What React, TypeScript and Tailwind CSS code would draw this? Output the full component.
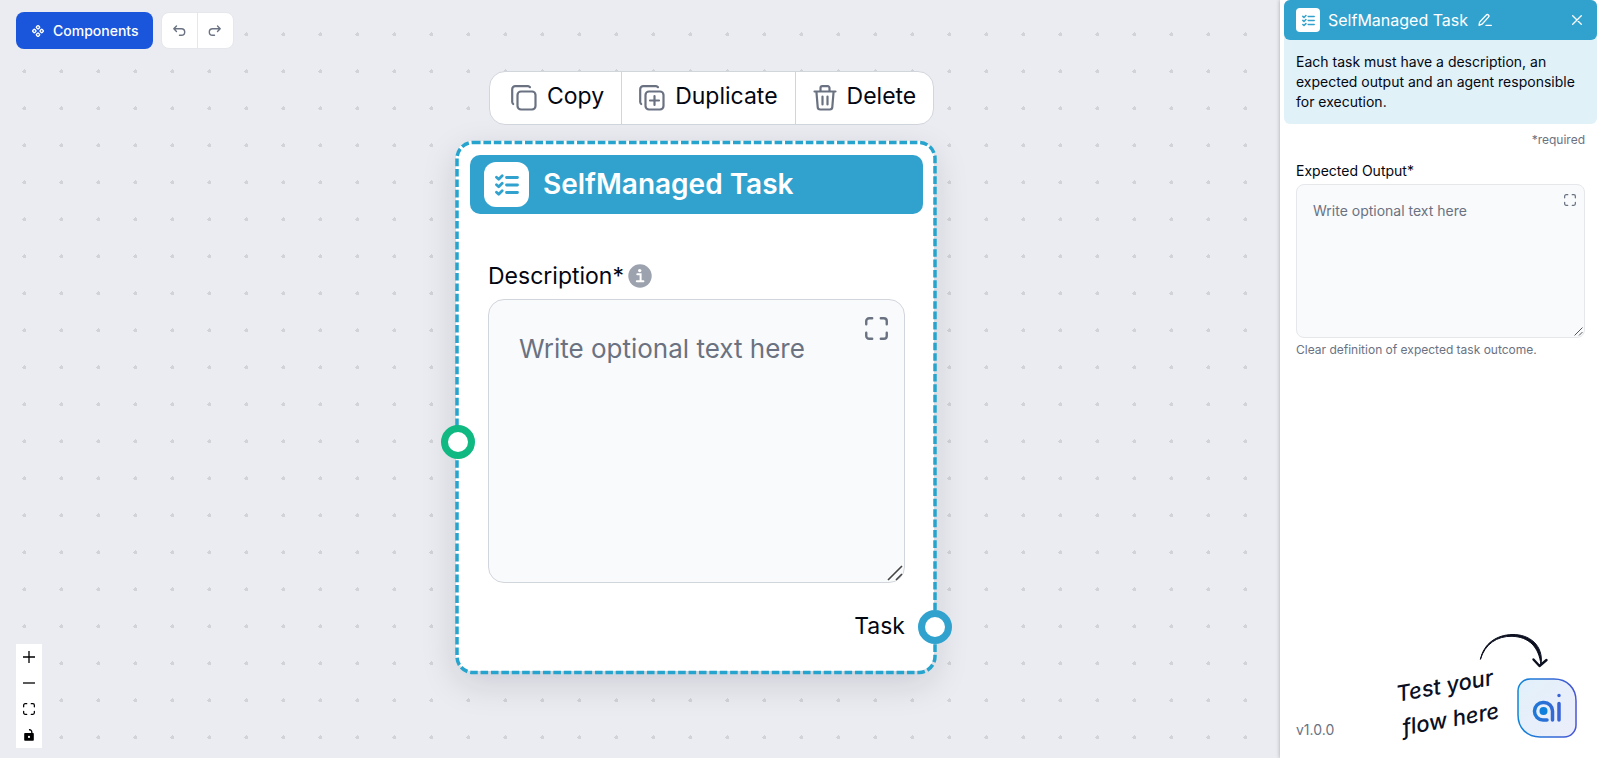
import { useId } from "react";

type IconProps = { className?: string };

function ComponentsIcon({ className }: IconProps) {
  return (
    <svg className={className} viewBox="0 0 14 14" fill="none" stroke="currentColor" strokeWidth="1.3">
      <rect x="5.6" y="1.9" width="2.8" height="2.8" rx=".7" transform="rotate(45 7 3.3)" />
      <rect x="5.6" y="9.3" width="2.8" height="2.8" rx=".7" transform="rotate(45 7 10.7)" />
      <rect x="1.9" y="5.6" width="2.8" height="2.8" rx=".7" transform="rotate(45 3.3 7)" />
      <rect x="9.3" y="5.6" width="2.8" height="2.8" rx=".7" transform="rotate(45 10.7 7)" />
    </svg>
  );
}

function UndoIcon({ className }: IconProps) {
  return (
    <svg className={className} viewBox="0 0 14 14" fill="none" stroke="currentColor" strokeWidth="1.4" strokeLinecap="round" strokeLinejoin="round">
      <path d="M4.5 2 1.8 4.7l2.7 2.7M1.8 4.7h7.6a3.3 3.3 0 0 1 0 6.6H7.5" />
    </svg>
  );
}

function CopyIcon({ className, plus }: IconProps & { plus?: boolean }) {
  return (
    <svg className={className} viewBox="0 0 26 26" fill="none" stroke="currentColor" strokeWidth="2.2" strokeLinecap="round" strokeLinejoin="round">
      <rect x="6.5" y="6.5" width="18" height="18" rx="3.5" />
      <path d="M2.2 19A3 3 0 0 1 1.2 17V4.2a3 3 0 0 1 3-3H17a3 3 0 0 1 2 1" />
      {plus && <path d="M15.5 11v9M11 15.5h9" />}
    </svg>
  );
}

function TrashIcon({ className }: IconProps) {
  return (
    <svg className={className} viewBox="0 0 24 26" fill="none" stroke="currentColor" strokeWidth="2.2" strokeLinecap="round" strokeLinejoin="round">
      <path d="M1.5 6.5h21M7.5 6V3a1.8 1.8 0 0 1 1.8-1.8h5.4A1.8 1.8 0 0 1 16.5 3v3M3.4 6.5l1.3 15.7a2.5 2.5 0 0 0 2.5 2.3h9.6a2.5 2.5 0 0 0 2.5-2.3l1.3-15.7M9.5 11.5v8M14.5 11.5v8" />
    </svg>
  );
}

function TaskListIcon({ className }: IconProps) {
  return (
    <svg className={className} viewBox="0 0 24 24" fill="none" stroke="currentColor" strokeWidth="2.8" strokeLinecap="round" strokeLinejoin="round">
      <path d="M11.5 4.5h11M11.5 12h11M11.5 19.5h11M1.5 4.3l2.2 2 3.5-3.5M1.5 11.8l2.2 2 3.5-3.5M1.5 19.3l2.2 2 3.5-3.5" />
    </svg>
  );
}

function ExpandIcon({ className }: IconProps) {
  return (
    <svg className={className} viewBox="0 0 24 24" fill="none" stroke="currentColor" strokeWidth="2.5" strokeLinecap="round" strokeLinejoin="round">
      <path d="M1.3 7.5V4.3a3 3 0 0 1 3-3h3.2M16.5 1.3h3.2a3 3 0 0 1 3 3v3.2M22.7 16.5v3.2a3 3 0 0 1-3 3h-3.2M7.5 22.7H4.3a3 3 0 0 1-3-3v-3.2" />
    </svg>
  );
}

function InfoIcon({ className }: IconProps) {
  return (
    <svg className={className} viewBox="0 0 24 24">
      <circle cx="12" cy="12" r="11.7" fill="#9ca3af" />
      <circle cx="11.7" cy="6.6" r="1.7" fill="#fff" />
      <path d="M9.3 10.3h3.3v6.700M8.800 17.300h6.600" stroke="#fff" strokeWidth="2" fill="none" strokeLinecap="round" />
    </svg>
  );
}

function PencilIcon({ className }: IconProps) {
  return (
    <svg className={className} viewBox="0 0 14 14" fill="none" stroke="currentColor" strokeWidth="1.3" strokeLinecap="round" strokeLinejoin="round">
      <path d="M1 12.3l.6-3.200L8.300 2a1.500 1.500 0 0 1 2.200 2.100L4 11.200zM8 12.400h5.300" />
    </svg>
  );
}

function ResizeGrip({ className }: IconProps) {
  return (
    <svg className={className} viewBox="0 0 16 16" fill="none" stroke="#444" strokeWidth="1.6">
      <path d="M1 15 15 1M9 15l6-6" />
    </svg>
  );
}

function AiLogo({ className }: IconProps) {
  const id = useId();
  return (
    <svg className={className} viewBox="0 0 60 60" fill="none">
      <defs>
        <linearGradient id={id} x1="0" y1="0" x2="60" y2="0" gradientUnits="userSpaceOnUse">
          <stop stopColor="#0e86d8" />
          <stop offset="1" stopColor="#4a55d4" />
        </linearGradient>
        <linearGradient id={id + "bg"} x1="0" y1="0" x2="1" y2="1">
          <stop stopColor="#e2f0fa" />
          <stop offset="1" stopColor="#ebeefb" />
        </linearGradient>
      </defs>
      <path d="M13 1h24c13 0 22 9 22 22v24a12 12 0 0 1-12 12H23C10 59 1 50 1 37V13A12 12 0 0 1 13 1z" fill={`url(#${id}bg)`} stroke={`url(#${id})`} strokeWidth="1.5" />
      <g stroke={`url(#${id})`} strokeWidth="3.5" strokeLinecap="round">
        <path d="M35.5 42V33a8.5 8.5 0 0 0-8.5-8.5h-1a8.5 8.5 0 0 0-8.5 8.5v.5a8.5 8.5 0 0 0 8.5 8.5h4" />
        <path d="M42 25.5V42M42 17.5v.1" />
      </g>
      <circle cx="26.5" cy="33" r="4" fill="#0e7fdc" />
    </svg>
  );
}

function ArrowDoodle({ className }: IconProps) {
  return (
    <svg className={className} viewBox="0 0 70 36" fill="none" stroke="#0b0f1f" strokeLinecap="round" strokeLinejoin="round">
      <path d="M1.5 26C5 10 18 2 33 1.5 50 1 65 12 62 32 60 14 50 3.8 33 3.3 18 3 6 11 1.5 26z" fill="#0b0f1f" strokeWidth="1" />
      <path d="M54.5 26.5l6 6.5 7-6" strokeWidth="2.4" />
    </svg>
  );
}

const toolbar = [
  { label: "Copy", icon: <CopyIcon className="size-[26px]" /> },
  { label: "Duplicate", icon: <CopyIcon className="size-[26px]" plus /> },
  { label: "Delete", icon: <TrashIcon className="h-[26px] w-6" /> },
];

function TopBar() {
  return (
    <div className="absolute left-4 top-3 flex gap-2">
      <button className="flex h-[37px] items-center gap-2 rounded-lg bg-[#1a56db] pl-[15px] pr-[14px] text-sm font-medium text-white">
        <ComponentsIcon className="size-[14px]" />
        Components
      </button>
      <div className="flex h-[37px] divide-x divide-gray-200 rounded-lg border border-gray-200 bg-white text-gray-500">
        <button aria-label="Undo" className="flex w-9 items-center justify-center">
          <UndoIcon className="size-[14px]" />
        </button>
        <button aria-label="Redo" className="flex w-[35px] items-center justify-center">
          <UndoIcon className="size-[14px] -scale-x-100" />
        </button>
      </div>
    </div>
  );
}

function ZoomControls() {
  return (
    <div className="absolute bottom-[10px] left-4 flex w-[26px] flex-col bg-white text-black">
      <button aria-label="Zoom in" className="flex h-[26px] items-center justify-center">
        <svg className="size-3" viewBox="0 0 12 12" stroke="currentColor" strokeWidth="1.3">
          <path d="M6 0v12M0 6h12" />
        </svg>
      </button>
      <button aria-label="Zoom out" className="flex h-[26px] items-center justify-center">
        <svg className="size-3" viewBox="0 0 12 12" stroke="currentColor" strokeWidth="1.3">
          <path d="M0 6h12" />
        </svg>
      </button>
      <button aria-label="Fit view" className="flex h-[26px] items-center justify-center">
        <ExpandIcon className="size-3" />
      </button>
      <button aria-label="Lock" className="flex h-[26px] items-center justify-center">
        <svg className="h-3 w-[10px]" viewBox="0 0 10 12">
          <path d="M1 4h8a.8.8 0 0 1 .8.8v6.200a.8.8 0 0 1-.8.8H1a.8.8 0 0 1-.8-.8V4.800A.8.8 0 0 1 1 4zM5 6.800a1 1 0 1 0 0 2.200 1 1 0 0 0 0-2.200z" fillRule="evenodd" />
          <path d="M7.800 5V3A2.300 2.300 0 0 0 5 .8" fill="none" stroke="#000" strokeWidth="1.3" />
        </svg>
      </button>
    </div>
  );
}

function TaskNode() {
  return (
    <div className="absolute left-[456px] top-[71px] w-[478px]">
      <div className="ml-[33px] flex h-[54px] w-fit divide-x divide-gray-300 rounded-2xl border border-gray-300 bg-white text-[23px]">
        {toolbar.map((item) => (
          <button key={item.label} className="flex items-center gap-[10px] px-[17px] first:pl-[21px]">
            <span className="text-gray-500">{item.icon}</span>
            <span className="pb-[3px]">{item.label}</span>
          </button>
        ))}
      </div>

      <div className="relative mt-4 rounded-2xl bg-white py-[14px] pl-[14px] pr-[11px] shadow-[0_12px_36px_rgba(17,24,39,0.14)]">
        <svg className="pointer-events-none absolute inset-0 size-full overflow-visible" fill="none">
          <rect x="1" y="1.5" width="100%" height="100%" rx="16" stroke="#27a4cd" strokeWidth="3.5" strokeDasharray="7.6 2.8" />
        </svg>

        <div className="flex h-[59px] items-center gap-[14px] rounded-[10px] bg-[#31a2ce] px-[14px]">
          <div className="flex size-[45px] items-center justify-center rounded-xl bg-white text-[#31a2ce]">
            <TaskListIcon className="size-6" />
          </div>
          <h2 className="pb-[2px] text-[28px] font-semibold text-white">SelfManaged Task</h2>
        </div>

        <div className="px-[18px] pt-[46px]">
          <div className="flex items-center gap-1">
            <label htmlFor="description" className="text-[23px] leading-8">Description*</label>
            <InfoIcon className="size-6" />
          </div>
          <div className="relative mt-[7px]">
            <textarea
              id="description"
              placeholder="Write optional text here"
              className="block h-[284px] w-full resize-none rounded-2xl border border-gray-300 bg-gray-50 px-[30px] py-[31px] text-[26px] leading-9 placeholder:text-gray-500"
            />
            <ExpandIcon className="absolute right-[17px] top-[18px] size-[23px] text-gray-500" />
            <ResizeGrip className="absolute bottom-[2px] right-[2px] size-4" />
          </div>
          <p className="pb-[15px] pt-[27px] text-right text-[23px] leading-8">Task</p>
        </div>

        <span className="absolute -left-[15px] top-[284px] size-[34px] rounded-full border-[7px] border-[#10b981] bg-white" />
        <span className="absolute -right-[18px] bottom-[27px] size-[34px] rounded-full border-[7px] border-[#31a2ce] bg-white" />
      </div>
    </div>
  );
}

function SidePanel() {
  return (
    <aside className="flex w-80 shrink-0 flex-col bg-white pl-1 pr-[3px] shadow-[0_0_4px_rgba(0,0,0,0.3)]">
      <div className="rounded-md bg-[#e1f1f8]">
        <div className="flex h-10 items-center rounded-md bg-[#31a2ce] px-3 text-white">
          <div className="flex size-6 items-center justify-center rounded bg-white text-[#31a2ce]">
            <TaskListIcon className="size-[13px]" />
          </div>
          <h2 className="ml-2 text-base">SelfManaged Task</h2>
          <button aria-label="Rename" className="ml-[10px]">
            <PencilIcon className="size-[14px]" />
          </button>
          <button aria-label="Close" className="ml-auto mr-[3px]">
            <svg className="size-[10px]" viewBox="0 0 10 10" stroke="currentColor" strokeWidth="1.3" strokeLinecap="round">
              <path d="M.7.7l8.600 8.600M9.300.7.700 9.300" />
            </svg>
          </button>
        </div>
        <p className="px-3 py-3 text-sm leading-5">
          Each task must have a description, an expected output and an agent responsible for execution.
        </p>
      </div>

      <div className="px-3 pt-2">
        <p className="text-right text-xs text-gray-500">*required</p>
        <label htmlFor="expected" className="mt-[13px] block text-sm">Expected Output*</label>
        <div className="relative mt-[3px]">
          <textarea
            id="expected"
            placeholder="Write optional text here"
            className="block h-[154px] w-full resize-none rounded-lg border border-gray-200 bg-gray-50 px-4 py-4 text-sm placeholder:text-gray-500"
          />
          <ExpandIcon className="absolute right-[9px] top-[10px] size-3 text-gray-500" />
          <ResizeGrip className="absolute bottom-[2px] right-[2px] size-[9px]" />
        </div>
        <p className="mt-1 text-xs text-gray-500">Clear definition of expected task outcome.</p>
      </div>

      <div className="mt-auto flex items-end pb-[18px] pl-3 pr-5">
        <span className="text-sm text-gray-500">v1.0.0</span>
        <div className="ml-auto mr-5 -rotate-10 pb-1 text-[22px] font-medium italic leading-[34px] text-[#0b0f1f]">
          <p>Test your</p>
          <p>flow here</p>
        </div>
        <button aria-label="Test your flow" className="relative mb-[2px]">
          <ArrowDoodle className="absolute -left-[38px] -top-[45px] h-9 w-[70px]" />
          <AiLogo className="size-[60px]" />
        </button>
      </div>
    </aside>
  );
}

export default function App() {
  return (
    <div className="flex h-screen overflow-hidden bg-[#ebecf1] font-[Inter,sans-serif] text-gray-950">
      <main className="relative min-w-0 flex-1 bg-[radial-gradient(circle,#d2d3d8_2px,transparent_2px)] bg-[length:37px_37px] bg-[position:6px_16px]">
        <TopBar />
        <ZoomControls />
        <TaskNode />
      </main>
      <SidePanel />
    </div>
  );
}
